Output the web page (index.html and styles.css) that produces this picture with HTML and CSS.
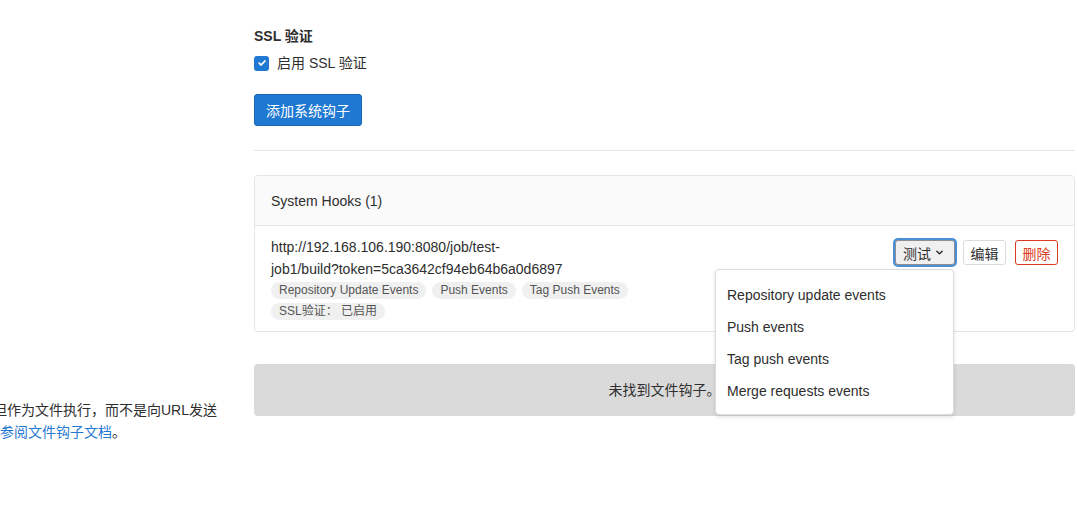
FILE: index.html
```html
<!DOCTYPE html>
<html lang="zh-CN">
<head>
    <meta charset="UTF-8">
    <title>系统钩子</title>
    <link rel="stylesheet" href="styles.css">
</head>
<body>
    <div class="settings-row">
        <div class="settings-side"></div>
        <div class="settings-main">
            <div class="form-group">
                <label class="group-label">SSL 验证</label>
                <div class="check-row">
                    <span class="check-box">
                        <svg width="10" height="10" viewBox="0 0 10 10"><path d="M2.2 5.2 L4.1 7 L7.9 3" fill="none" stroke="#fff" stroke-width="1.8" stroke-linecap="round" stroke-linejoin="round"/></svg>
                    </span>
                    <span>启用 SSL 验证</span>
                </div>
            </div>
            <button type="button" class="btn-primary">添加系统钩子</button>
            <hr class="divider">

            <div class="panel">
                <div class="panel-heading">System Hooks (1)</div>
                <div class="panel-body">
                    <div class="hook-info">
                        <div class="hook-url">http://192.168.106.190:8080/job/test-<span class="nowrap">job1/build?token=5ca3642cf94eb64b6a0d6897</span></div>
                        <div class="badges">
                            <span class="badge">Repository Update Events</span>
                            <span class="badge">Push Events</span>
                            <span class="badge">Tag Push Events</span>
                        </div>
                        <div class="badges">
                            <span class="badge">SSL验证： 已启用</span>
                        </div>
                    </div>
                    <div class="hook-actions">
                        <div class="dropdown">
                            <button type="button" class="btn btn-test">测试
                                <svg width="9" height="9" viewBox="0 0 10 10"><path d="M2 3.5 L5 6.5 L8 3.5" fill="none" stroke="#2e2e2e" stroke-width="1.6" stroke-linecap="round" stroke-linejoin="round"/></svg>
                            </button>
                            <ul class="dropdown-menu">
                                <li>Repository update events</li>
                                <li>Push events</li>
                                <li>Tag push events</li>
                                <li>Merge requests events</li>
                            </ul>
                        </div>
                        <button type="button" class="btn">编辑</button>
                        <button type="button" class="btn btn-remove">删除</button>
                    </div>
                </div>
            </div>
        </div>
    </div>

    <div class="settings-row second">
        <div class="settings-side">
            <p class="side-text">但作为文件执行，而不是向URL发送<br><a href="#">参阅文件钩子文档</a>。</p>
        </div>
        <div class="settings-main">
            <div class="empty-box">未找到文件钩子。</div>
        </div>
    </div>
</body>
</html>
```

FILE: styles.css
```css
body {
    margin: 0;
    font-family: "Liberation Sans", "Noto Sans CJK SC", sans-serif;
    font-size: 14px;
    color: #2e2e2e;
    background-color: #fff;
    overflow: hidden;
}
.settings-row {
    display: flex;
}
.settings-side {
    width: 254px;
    flex-shrink: 0;
    overflow: hidden;
}
.settings-main {
    width: 821px;
}
.form-group {
    padding-top: 26px;
}
.group-label {
    display: block;
    font-weight: bold;
    line-height: 20px;
    margin-bottom: 6px;
}
.check-row {
    display: flex;
    align-items: center;
    gap: 8px;
    line-height: 20px;
    padding-top: 1px;
}
.check-box {
    width: 15px;
    height: 15px;
    border-radius: 3px;
    background-color: #1f78d1;
    display: flex;
    align-items: center;
    justify-content: center;
}
.btn-primary {
    margin-top: 21px;
    height: 32px;
    padding: 0 11px;
    background-color: #1f78d1;
    border: 1px solid #1b69b6;
    border-radius: 3px;
    color: #fff;
    font-family: inherit;
    font-size: 14px;
}
.divider {
    margin: 24px 0 0;
    border: none;
    border-top: 1px solid #e5e5e5;
}
.panel {
    margin-top: 24px;
    border: 1px solid #e5e5e5;
    border-radius: 4px;
}
.panel-heading {
    height: 47px;
    line-height: 47px;
    padding: 2px 16px 0;
    background-color: #fafafa;
    border-bottom: 1px solid #e5e5e5;
    border-radius: 4px 4px 0 0;
}
.panel-body {
    display: flex;
    justify-content: space-between;
    padding: 10px 16px 11px;
}
.hook-url {
    width: 380px;
    line-height: 22px;
    margin-bottom: 2px;
}
.nowrap {
    white-space: nowrap;
}
.badges {
    display: flex;
    gap: 6px;
    margin-bottom: 4px;
}
.badges:last-child {
    margin-bottom: 0;
}
.badge {
    background-color: #f0f0f0;
    color: #555;
    font-size: 12px;
    line-height: 17px;
    padding: 0 8px;
    border-radius: 9px;
}
.hook-actions {
    display: flex;
    gap: 8px;
    align-items: flex-start;
    padding-top: 4px;
}
.dropdown {
    position: relative;
}
.btn {
    width: 43px;
    height: 25px;
    padding: 0;
    background-color: #fff;
    border: 1px solid #dbdbdb;
    border-radius: 3px;
    color: #2e2e2e;
    font-family: inherit;
    font-size: 14px;
}
.btn-test {
    display: flex;
    align-items: center;
    gap: 4px;
    width: 60px;
    padding: 0 7px;
    background-color: #f0f0f0;
    border-color: #8f8f8f;
    box-shadow: 0 0 0 2px #4a90d9;
}
.btn-remove {
    margin-left: 1px;
    color: #db3b21;
    border-color: #db3b21;
}
.dropdown-menu {
    position: absolute;
    top: 29px;
    right: 1px;
    width: 237px;
    margin: 0;
    padding: 9px 0 7px;
    list-style: none;
    background-color: #fff;
    border: 1px solid #dbdbdb;
    border-radius: 4px;
    box-shadow: 0 2px 4px rgba(0, 0, 0, 0.12);
    z-index: 10;
}
.dropdown-menu li {
    line-height: 32px;
    padding: 0 11px;
}
.second {
    margin-top: 32px;
}
.side-text {
    margin: 35px 0 0;
    text-indent: -7px;
    line-height: 22px;
    white-space: nowrap;
}
.side-text a {
    color: #1f78d1;
    text-decoration: none;
}
.empty-box {
    height: 52px;
    line-height: 52px;
    text-align: center;
    background-color: #dadada;
    border-radius: 4px;
}
```
